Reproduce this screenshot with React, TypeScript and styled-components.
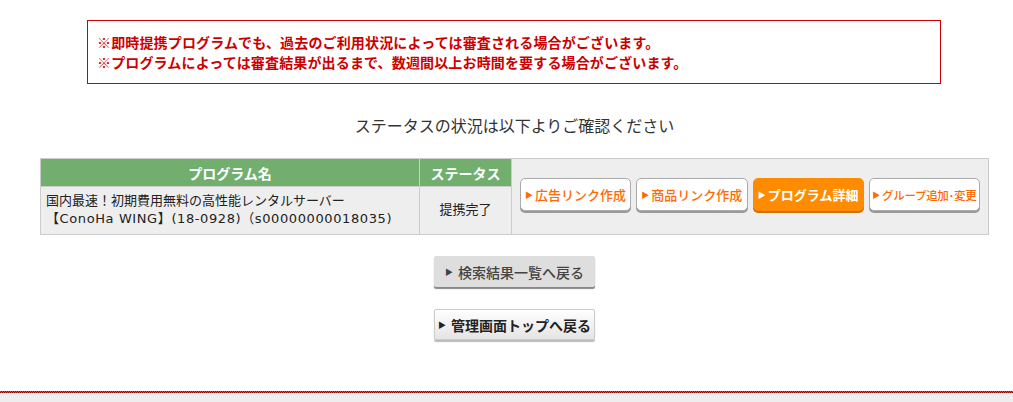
import React from 'react';
import styled, { createGlobalStyle } from 'styled-components';

const GlobalStyle = createGlobalStyle`
  html, body {
    margin: 0;
    padding: 0;
    background: #fff;
  }
  body {
    font-family: "Noto Sans CJK JP", "Noto Sans", sans-serif;
    color: #333;
  }
`;

const Page = styled.div`
  display: flex;
  flex-direction: column;
  min-height: 402px;
`;

const Main = styled.main`
  padding: 20px 24px 0 40px;
  display: flex;
  flex-direction: column;
  align-items: center;
`;

const Notice = styled.div`
  align-self: stretch;
  margin: 0 48px 0 47px;
  border: 1px solid #cc0000;
  padding: 11px 9px;
  color: #cc0000;
  font-weight: 700;
  font-size: 14px;
  line-height: 20px;
  letter-spacing: 0.15px;
`;

const Heading = styled.p`
  margin: 29px 0 0;
  font-size: 16px;
  line-height: 24px;
  color: #333;
`;

const Table = styled.table`
  margin-top: 21px;
  width: 100%;
  border-collapse: collapse;
  table-layout: fixed;
  font-size: 13px;
`;

const Th = styled.th<{ $w: number }>`
  width: ${({ $w }) => $w}px;
  background: #72af6e;
  color: #fff;
  font-weight: 700;
  font-size: 14px;
  height: 27px;
  padding: 0;
  border: 1px solid #ccc;
  text-align: center;
`;

const Td = styled.td<{ $center?: boolean }>`
  background: #eee;
  border: 1px solid #ccc;
  padding: 5px 5px 6px;
  line-height: 18px;
  font-family: "DejaVu Sans", "Noto Sans CJK JP", sans-serif;
  font-size: 13px;
  color: #222;
  text-align: ${({ $center }) => ($center ? 'center' : 'left')};
  vertical-align: middle;
`;

const Latin = styled.span`
  letter-spacing: 0.6px;
`;

const ActionCell = styled.td`
  background: #eee;
  border: 1px solid #ccc;
  padding: 0 8px 4px;
  vertical-align: middle;
`;

const ActionRow = styled.div`
  display: flex;
  gap: 5px;
`;

const ActionButton = styled.a<{ $primary?: boolean; $small?: boolean }>`
  box-sizing: border-box;
  width: 112px;
  height: 33px;
  display: flex;
  align-items: center;
  justify-content: center;
  gap: 2px;
  border-radius: 5px;
  border: 1px solid ${({ $primary }) => ($primary ? '#ff8c00' : '#aaa')};
  background: ${({ $primary }) => ($primary ? '#ff8c00' : '#fff')};
  box-shadow: 0 2px 0 ${({ $primary }) => ($primary ? '#cc7000' : '#999')};
  color: ${({ $primary }) => ($primary ? '#fff' : '#ff6a00')};
  font-weight: ${({ $primary }) => ($primary ? 700 : 500)};
  font-size: ${({ $small }) => ($small ? '11.5px' : '13px')};
  letter-spacing: ${({ $small }) => ($small ? '-0.3px' : '0')};
  white-space: nowrap;
  text-decoration: none;
  cursor: pointer;
`;

const Arrow = styled.span`
  font-size: 8px;
  line-height: 1;
`;

const BackButton = styled.a<{ $strong?: boolean }>`
  box-sizing: border-box;
  width: 161px;
  height: 31px;
  display: flex;
  align-items: center;
  justify-content: center;
  gap: 5px;
  border-radius: 2px;
  border: 1px solid ${({ $strong }) => ($strong ? '#ccc' : '#ddd')};
  background: ${({ $strong }) =>
    $strong ? 'linear-gradient(#fff, #e4e4e4)' : '#dedede'};
  box-shadow: 0 2px 1px ${({ $strong }) => ($strong ? '#bbb' : '#888')};
  color: ${({ $strong }) => ($strong ? '#222' : '#444')};
  font-weight: ${({ $strong }) => ($strong ? 700 : 500)};
  font-size: 14px;
  text-decoration: none;
  cursor: pointer;
`;

const BackList = styled.div`
  margin-top: 21px;
  display: flex;
  flex-direction: column;
  align-items: center;
  gap: 22px;
`;

const Spacer = styled.div`
  flex: 1;
`;

const FooterLine = styled.div`
  height: 2px;
  background: repeating-conic-gradient(#a00000 0 25%, #e04040 0 50%) 0 0 / 2px 2px;
`;

const FooterBody = styled.div`
  height: 9px;
  background: #eee;
`;

const actions = [
  { label: '広告リンク作成' },
  { label: '商品リンク作成' },
  { label: 'プログラム詳細', primary: true },
  { label: 'グループ追加･変更', small: true },
];

export default function App() {
  return (
    <Page>
      <GlobalStyle />
      <Main>
        <Notice>
          ※即時提携プログラムでも、過去のご利用状況によっては審査される場合がございます。
          <br />
          ※プログラムによっては審査結果が出るまで、数週間以上お時間を要する場合がございます。
        </Notice>
        <Heading>ステータスの状況は以下よりご確認ください</Heading>
        <Table>
          <tbody>
            <tr>
              <Th $w={378}>プログラム名</Th>
              <Th $w={91}>ステータス</Th>
              <ActionCell rowSpan={2}>
                <ActionRow>
                  {actions.map((a) => (
                    <ActionButton key={a.label} $primary={a.primary} $small={a.small}>
                      <Arrow>▶</Arrow>
                      {a.primary ? ' ' : ''}
                      {a.label}
                    </ActionButton>
                  ))}
                </ActionRow>
              </ActionCell>
            </tr>
            <tr>
              <Td>
                国内最速！初期費用無料の高性能レンタルサーバー
                <br />
                <Latin>【ConoHa WING】(18-0928)（s00000000018035)</Latin>
              </Td>
              <Td $center>提携完了</Td>
            </tr>
          </tbody>
        </Table>
        <BackList>
          <BackButton>
            <Arrow>▶</Arrow>検索結果一覧へ戻る
          </BackButton>
          <BackButton $strong>
            <Arrow>▶</Arrow>管理画面トップへ戻る
          </BackButton>
        </BackList>
      </Main>
      <Spacer />
      <FooterLine />
      <FooterBody />
    </Page>
  );
}
